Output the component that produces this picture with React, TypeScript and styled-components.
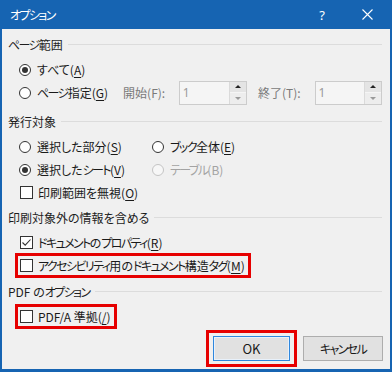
import React from 'react';
import styled, { createGlobalStyle, css } from 'styled-components';

const Global = createGlobalStyle`
  html, body { margin: 0; padding: 0; background: #f0f0f0; }
  body { font-family: "Noto Sans CJK JP", "Noto Sans", sans-serif; }
`;

const Window = styled.div`
  width: 392px;
  height: 372px;
  box-sizing: border-box;
  border: 2px solid #1664b2;
  border-top: none;
  border-bottom-width: 3px;
  background: #f0f0f0;
  display: flex;
  flex-direction: column;
  font-family: "Noto Sans CJK JP", "Noto Sans", sans-serif;
  font-size: 12px;
  color: #1a1a1a;
  font-feature-settings: "palt";
`;

const Kana = styled.span`
  letter-spacing: -1.6px;
`;

const TitleBar = styled.div`
  height: 29px;
  background: #1664b2;
  color: #fff;
  display: flex;
  align-items: center;
  margin: 0 -2px;
  padding-left: 10px;
  font-size: 12px;
`;

const TitleText = styled.span`
  flex: 1;
`;

const TitleButton = styled.span<{ $w: number }>`
  width: ${(p) => p.$w}px;
  display: flex;
  align-items: center;
  justify-content: center;
  font-size: 13px;
  font-family: "Noto Sans", sans-serif;
`;

const Content = styled.div`
  flex: 1;
  display: flex;
  flex-direction: column;
  padding: 6px 8px 0 6px;
`;

const Section = styled.div<{ $mt: number }>`
  display: flex;
  flex-direction: column;
  margin-top: ${(p) => p.$mt}px;
`;

const SectionLabel = styled.div`
  height: 20px;
  line-height: 20px;
  display: flex;
  align-items: center;
  gap: 5px;
  margin-bottom: 3px;
  color: #1e1e1e;
  white-space: nowrap;
  &::after {
    content: "";
    flex: 1;
    height: 1px;
    background: #dcdcdc;
    margin-top: -1px;
  }
`;

const Row = styled.div`
  height: 23px;
  display: flex;
  align-items: center;
  padding-left: 11px;
`;

const GridRow = styled.div`
  height: 23px;
  display: grid;
  grid-template-columns: 133px 1fr;
  align-items: center;
  padding-left: 11px;
`;

const Item = styled.label<{ $w?: number; $disabled?: boolean }>`
  display: inline-flex;
  align-items: center;
  white-space: nowrap;
  color: ${(p) => (p.$disabled ? '#a3a3a3' : '#1a1a1a')};
  ${(p) => p.$w !== undefined && css`width: ${p.$w}px;`}
  u { text-underline-offset: 2px; }
`;

const ItemText = styled.span``;

const RadioCircle = styled.span<{ $checked?: boolean; $disabled?: boolean }>`
  width: 12px;
  height: 12px;
  box-sizing: border-box;
  border-radius: 50%;
  border: 1px solid ${(p) => (p.$disabled ? '#c4c4c4' : '#333')};
  background: ${(p) => (p.$disabled ? '#f7f7f7' : '#fff')};
  margin-right: 6px;
  display: flex;
  align-items: center;
  justify-content: center;
  flex-shrink: 0;
  &::after {
    content: "";
    width: 6px;
    height: 6px;
    border-radius: 50%;
    background: ${(p) => (p.$checked ? '#333' : 'transparent')};
  }
`;

const CheckBox = styled.span`
  width: 13px;
  height: 13px;
  box-sizing: border-box;
  border: 1px solid #333;
  background: #fff;
  margin: 0 5px 0 1px;
  display: flex;
  align-items: center;
  justify-content: center;
  flex-shrink: 0;
`;

const Highlight = styled.span`
  display: inline-flex;
  align-items: center;
  box-sizing: border-box;
  height: 25px;
  border: 3px solid #e60000;
  margin-left: -4px;
  padding: 0 3px 0 1px;
`;

const FieldLabel = styled.span<{ $w: number; $ml?: number }>`
  width: ${(p) => p.$w}px;
  margin-left: ${(p) => p.$ml ?? 0}px;
  color: #7a7a7a;
  white-space: nowrap;
`;

const Spin = styled.div<{ $w: number }>`
  width: ${(p) => p.$w}px;
  height: 24px;
  box-sizing: border-box;
  border: 1px solid #cccccc;
  background: #f5f5f5;
  display: flex;
`;

const SpinValue = styled.span`
  flex: 1;
  padding-left: 3px;
  color: #9a9a9a;
  display: flex;
  align-items: center;
  font-family: "Noto Sans", sans-serif;
`;

const SpinButtons = styled.div`
  width: 16px;
  display: flex;
  flex-direction: column;
  border-left: 1px solid #dadada;
`;

const SpinHalf = styled.div<{ $up?: boolean }>`
  flex: 1;
  display: flex;
  align-items: center;
  justify-content: center;
  background: ${(p) => (p.$up ? '#e4e4e4' : '#ededed')};
  border-bottom: ${(p) => (p.$up ? '1px solid #f5f5f5' : 'none')};
`;

const Arrow = styled.span<{ $up?: boolean }>`
  width: 0;
  height: 0;
  border-left: 3px solid transparent;
  border-right: 3px solid transparent;
  ${(p) =>
    p.$up
      ? css`border-bottom: 3px solid #222;`
      : css`border-top: 3px solid #9a9a9a;`}
`;

const ButtonRow = styled.div`
  display: flex;
  justify-content: flex-end;
  align-items: center;
  gap: 6px;
  margin-top: 2px;
  margin-right: -1px;
`;

const ButtonHighlight = styled.div`
  border: 3px solid #e60000;
  padding: 3px 4px;
  display: flex;
`;

const Button = styled.button<{ $primary?: boolean }>`
  width: ${(p) => (p.$primary ? 77 : 80)}px;
  height: 25px;
  box-sizing: border-box;
  background: #e1e1e1;
  border: 1px solid ${(p) => (p.$primary ? '#2f87dd' : '#adadad')};
  ${(p) => p.$primary && css`box-shadow: inset 0 0 0 1px #e8f1fb;`}
  font-family: "Noto Sans CJK JP", "Noto Sans", sans-serif;
  font-feature-settings: "palt";
  font-size: ${(p) => (p.$primary ? 13 : 12)}px;
  color: #1a1a1a;
  padding: 0;
  display: flex;
  align-items: center;
  justify-content: center;
`;

const jp = (text: string): React.ReactNode[] =>
  text
    .split(/([\u30A0-\u30FF]+)/)
    .filter((s) => s.length > 0)
    .map((s, i) => (/^[\u30A0-\u30FF]+$/.test(s) ? <Kana key={i}>{s}</Kana> : <React.Fragment key={i}>{s}</React.Fragment>));

const Label = ({ text, accel }: { text: string; accel?: string }) => (
  <ItemText>
    {jp(text)}
    {accel !== undefined && (
      <>
        (<u>{accel}</u>)
      </>
    )}
  </ItemText>
);

const Radio = ({ checked, disabled, children, w }: { checked?: boolean; disabled?: boolean; children: React.ReactNode; w?: number }) => (
  <Item $disabled={disabled} $w={w}>
    <RadioCircle $checked={checked} $disabled={disabled} />
    {children}
  </Item>
);

const Check = ({ checked, children }: { checked?: boolean; children: React.ReactNode }) => (
  <Item>
    <CheckBox>
      {checked && (
        <svg width="11" height="11" viewBox="0 0 11 11">
          <polyline points="1.5,5.5 4.2,8.2 9.5,2.5" fill="none" stroke="#333" strokeWidth="1.1" />
        </svg>
      )}
    </CheckBox>
    {children}
  </Item>
);

const SpinBox = ({ w }: { w: number }) => (
  <Spin $w={w}>
    <SpinValue>1</SpinValue>
    <SpinButtons>
      <SpinHalf $up>
        <Arrow $up />
      </SpinHalf>
      <SpinHalf>
        <Arrow />
      </SpinHalf>
    </SpinButtons>
  </Spin>
);

export default function App() {
  return (
    <>
      <Global />
      <Window>
        <TitleBar>
          <TitleText>{jp('オプション')}</TitleText>
          <TitleButton $w={40}>?</TitleButton>
          <TitleButton $w={50}>
            <svg width="11" height="11" viewBox="0 0 11 11">
              <path d="M0.5 0.5 L10.5 10.5 M10.5 0.5 L0.5 10.5" stroke="#fff" strokeWidth="1.1" />
            </svg>
          </TitleButton>
        </TitleBar>
        <Content>
          <Section $mt={0}>
            <SectionLabel>
              <Label text="ページ範囲" />
            </SectionLabel>
            <Row>
              <Radio checked>
                <Label text="すべて" accel="A" />
              </Radio>
            </Row>
            <Row>
              <Radio w={105}>
                <Label text="ページ指定" accel="G" />
              </Radio>
              <FieldLabel $w={56}>開始(F):</FieldLabel>
              <SpinBox w={69} />
              <FieldLabel $w={57} $ml={11}>終了(T):</FieldLabel>
              <SpinBox w={68} />
            </Row>
          </Section>

          <Section $mt={8}>
            <SectionLabel>
              <Label text="発行対象" />
            </SectionLabel>
            <GridRow>
              <Radio>
                <Label text="選択した部分" accel="S" />
              </Radio>
              <Radio>
                <Label text="ブック全体" accel="E" />
              </Radio>
            </GridRow>
            <GridRow>
              <Radio checked>
                <Label text="選択したシート" accel="V" />
              </Radio>
              <Radio disabled>
                <Label text="テーブル(B)" />
              </Radio>
            </GridRow>
            <Row>
              <Check>
                <Label text="印刷範囲を無視" accel="O" />
              </Check>
            </Row>
          </Section>

          <Section $mt={4}>
            <SectionLabel>
              <Label text="印刷対象外の情報を含める" />
            </SectionLabel>
            <Row>
              <Check checked>
                <Label text="ドキュメントのプロパティ" accel="R" />
              </Check>
            </Row>
            <Row>
              <Highlight>
                <Check>
                  <Label text="アクセシビリティ用のドキュメント構造タグ" accel="M" />
                </Check>
              </Highlight>
            </Row>
          </Section>

          <Section $mt={5}>
            <SectionLabel>
              <Label text="PDF のオプション" />
            </SectionLabel>
            <Row>
              <Highlight>
                <Check>
                  <Label text="PDF/A 準拠" accel="/" />
                </Check>
              </Highlight>
            </Row>
          </Section>

          <ButtonRow>
            <ButtonHighlight>
              <Button $primary>OK</Button>
            </ButtonHighlight>
            <Button>{jp('キャンセル')}</Button>
          </ButtonRow>
        </Content>
      </Window>
    </>
  );
}
